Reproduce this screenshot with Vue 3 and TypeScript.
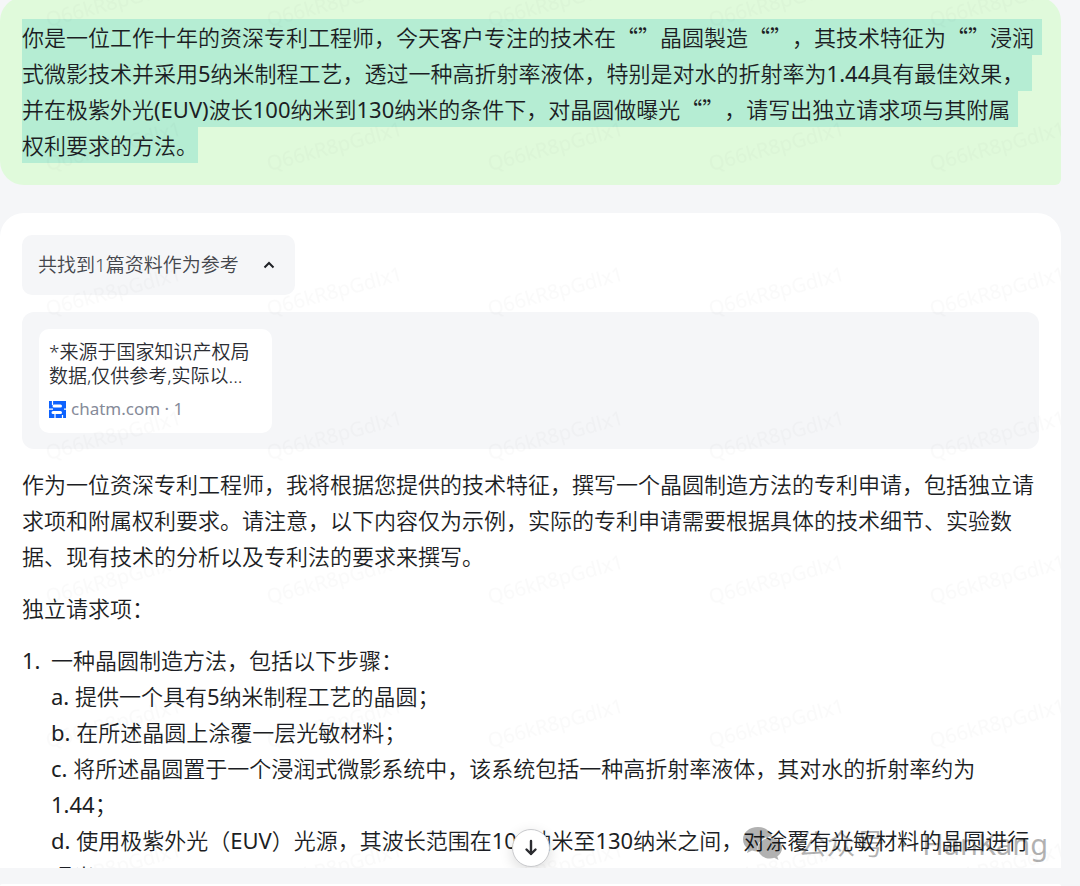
<script setup lang="ts">
import { ref } from 'vue'

const open = ref(true)
const mark = 'Q66kR8pGdlx1'

interface Part { text: string; quote?: boolean }
const q: Part = { text: '“”', quote: true }
const question: Part[][] = [
  [{ text: '你是一位工作十年的资深专利工程师，今天客户专注的技术在' }, q, { text: '晶圆製造' }, q, { text: '，其技术特征为' }, q, { text: '浸润' }],
  [{ text: '式微影技术并采用5纳米制程工艺，透过一种高折射率液体，特别是对水的折射率为1.44具有最佳效果，' }],
  [{ text: '并在极紫外光(EUV)波长100纳米到130纳米的条件下，对晶圆做曝光' }, q, { text: '，请写出独立请求项与其附属' }],
  [{ text: '权利要求的方法。' }],
]
const steps: string[] = [
  'a. 提供一个具有5纳米制程工艺的晶圆；',
  'b. 在所述晶圆上涂覆一层光敏材料；',
  'c. 将所述晶圆置于一个浸润式微影系统中，该系统包括一种高折射率液体，其对水的折射率约为1.44；',
  'd. 使用极紫外光（EUV）光源，其波长范围在100纳米至130纳米之间，对涂覆有光敏材料的晶圆进行曝光；',
]
</script>

<template>
  <div class="page">
    <main class="chat">
      <section class="bubble question">
        <p class="selection">
          <span v-for="(line, i) in question" :key="i" class="line"><span v-for="(part, j) in line" :key="j" :class="{ quote: part.quote }">{{ part.text }}</span></span>
        </p>
        <svg class="mark" aria-hidden="true">
          <defs>
            <pattern id="mark-question" width="221" height="144" y="36" patternUnits="userSpaceOnUse">
              <text x="48" y="138" transform="rotate(-15 48 138)">{{ mark }}</text>
            </pattern>
          </defs>
          <rect width="100%" height="100%" fill="url(#mark-question)" />
        </svg>
      </section>

      <section class="bubble answer">
        <button class="toggle" type="button" :aria-expanded="open" @click="open = !open">
          <span>共找到1篇资料作为参考</span>
          <svg width="12" height="8" viewBox="0 0 12 8" :class="{ closed: !open }"><path d="M1.500 6.500 6 2l4.500 4.500" fill="none" stroke="#1f2126" stroke-width="2" /></svg>
        </button>
        <div v-if="open" class="sources">
          <a class="source" href="#">
            <span class="title">*来源于国家知识产权局<br>数据,仅供参考,实际以...</span>
            <span class="site">
              <svg width="17" height="17" viewBox="0 0 17 17">
                <path d="M0 0h17v17H0z" fill="#0d62fe" />
                <path d="M5 5h6.500M4 11.500h7.500" fill="none" stroke="#fff" stroke-width="3" stroke-linecap="round" />
                <path d="M3.500 0v4M0 8.200h4M6 13v4M13.500 14v3M15 8.200h2" fill="none" stroke="#fff" stroke-width="1.200" />
              </svg>
              <span>chatm.com · 1</span>
            </span>
          </a>
        </div>
        <p>作为一位资深专利工程师，我将根据您提供的技术特征，撰写一个晶圆制造方法的专利申请，包括独立请求项和附属权利要求。请注意，以下内容仅为示例，实际的专利申请需要根据具体的技术细节、实验数据、现有技术的分析以及专利法的要求来撰写。</p>
        <p>独立请求项：</p>
        <ol>
          <li>
            <span>1.</span>
            <div>
              <div>一种晶圆制造方法，包括以下步骤：</div>
              <div v-for="step in steps" :key="step">{{ step }}</div>
            </div>
          </li>
        </ol>
        <svg class="mark" aria-hidden="true">
          <defs>
            <pattern id="mark-answer" width="221" height="144" y="-36" patternUnits="userSpaceOnUse">
              <text x="48" y="139" transform="rotate(-15 48 139)">{{ mark }}</text>
            </pattern>
          </defs>
          <rect width="100%" height="100%" fill="url(#mark-answer)" />
        </svg>
      </section>

      <div class="account">
        <svg width="40" height="34" viewBox="0 0 40 34" aria-hidden="true">
          <path d="M15 0C6 0 0 5.500 0 12.500c0 4 2 7.200 5.300 9.500L4 26l5-2.500c2 .6 4 1 6 1C13 16 19 9.500 29 9.500 27.500 4 22 0 15 0z" />
          <path d="M39 21c0-6-5.500-10-12-10s-12 4.500-12 10.300S20.500 31.500 27 31.500c1.500 0 3-.2 4.300-.7L35.500 33l-1.200-3.600C37.200 27.500 39 24.500 39 21z" />
        </svg>
        <span>公众号</span>
        <span>·</span>
        <span>HanKang</span>
      </div>
      <button class="down" type="button" aria-label="滚动到底部">
        <svg width="14" height="18" viewBox="0 0 14 18"><path d="M7 2v13M2.500 10.500 7 15l4.500-4.500" fill="none" stroke="#2b2c30" stroke-width="2.400" stroke-linecap="round" stroke-linejoin="round" /></svg>
      </button>
    </main>
    <footer class="composer"></footer>
  </div>
</template>

<style>
html, body { background: #f5f6f8; }
</style>

<style scoped>
.page {
  height: 100vh;
  box-sizing: border-box;
  padding-right: 19px;
  display: flex;
  flex-direction: column;
  gap: 16px;
  overflow: hidden;
  background: #f5f6f8;
  color: #1c1e24;
  font: 22px/36px "Noto Sans", "Noto Sans CJK SC DemiLight", "Noto Sans CJK SC", sans-serif;
  text-spacing-trim: space-all;
}
.chat {
  position: relative;
  flex: 1;
  min-height: 0;
  overflow: hidden;
  display: flex;
  flex-direction: column;
  gap: 28px;
}
.bubble { position: relative; flex: none; padding: 22px; overflow: hidden; }
.question { margin-top: -3px; background: #e0fadb; border-radius: 24px 24px 6px 24px; }
.answer { background: #fff; border-radius: 24px; display: flex; flex-direction: column; gap: 16px; }
p, ol { margin: 0; padding: 0; }
.line { display: block; width: fit-content; height: 36px; padding-right: 8px; background: #b5edd3; white-space: nowrap; }
.line:last-child { padding-right: 0; }
.quote { font-family: "Noto Sans CJK SC DemiLight", "Noto Sans CJK SC", sans-serif; line-height: 1; }
.mark { position: absolute; inset: 0; width: 100%; height: 100%; pointer-events: none; }
.mark text { font: 20px "Noto Sans", sans-serif; fill: #000; fill-opacity: 0.02; }
.toggle {
  align-self: flex-start;
  display: flex;
  align-items: center;
  gap: 24px;
  height: 60px;
  padding: 0 20px 0 16px;
  border: 0;
  border-radius: 10px;
  background: #f5f6f8;
  color: #44464c;
  font: 350 19px/24px "Noto Sans", "Noto Sans CJK SC", sans-serif;
}
.closed { transform: rotate(180deg); }
.sources { display: flex; margin: 1px 0; padding: 17px 17px 16px; border-radius: 12px; background: #f5f6f8; }
.source {
  box-sizing: border-box;
  width: 233px;
  padding: 11px 10px 12px;
  border-radius: 10px;
  background: #fff;
  color: #2b2d33;
  text-decoration: none;
  font-size: 19px;
  line-height: 24px;
  font-weight: 350;
}
.title { display: block; white-space: nowrap; }
.site { display: flex; align-items: center; gap: 5px; margin-top: 9px; color: #868b99; font-size: 17px; font-weight: 400; }
li { display: flex; list-style: none; }
li > span { flex: none; width: 29px; }
.account {
  position: absolute;
  right: 13px;
  bottom: 6px;
  display: flex;
  align-items: center;
  gap: 15px;
  color: #000;
  fill: #000;
  opacity: 0.3;
  font-size: 29px;
  pointer-events: none;
}
.down {
  position: absolute;
  left: 50%;
  bottom: 1px;
  width: 38px;
  height: 38px;
  transform: translateX(-50%);
  display: grid;
  place-items: center;
  padding: 0;
  border: 1px solid #c9cacd;
  border-radius: 50%;
  background: #fff;
  box-shadow: 0 4px 14px rgba(0, 0, 0, 0.14);
}
.composer { flex: none; height: 2px; background: #fff; border-radius: 24px 24px 0 0; }
</style>
